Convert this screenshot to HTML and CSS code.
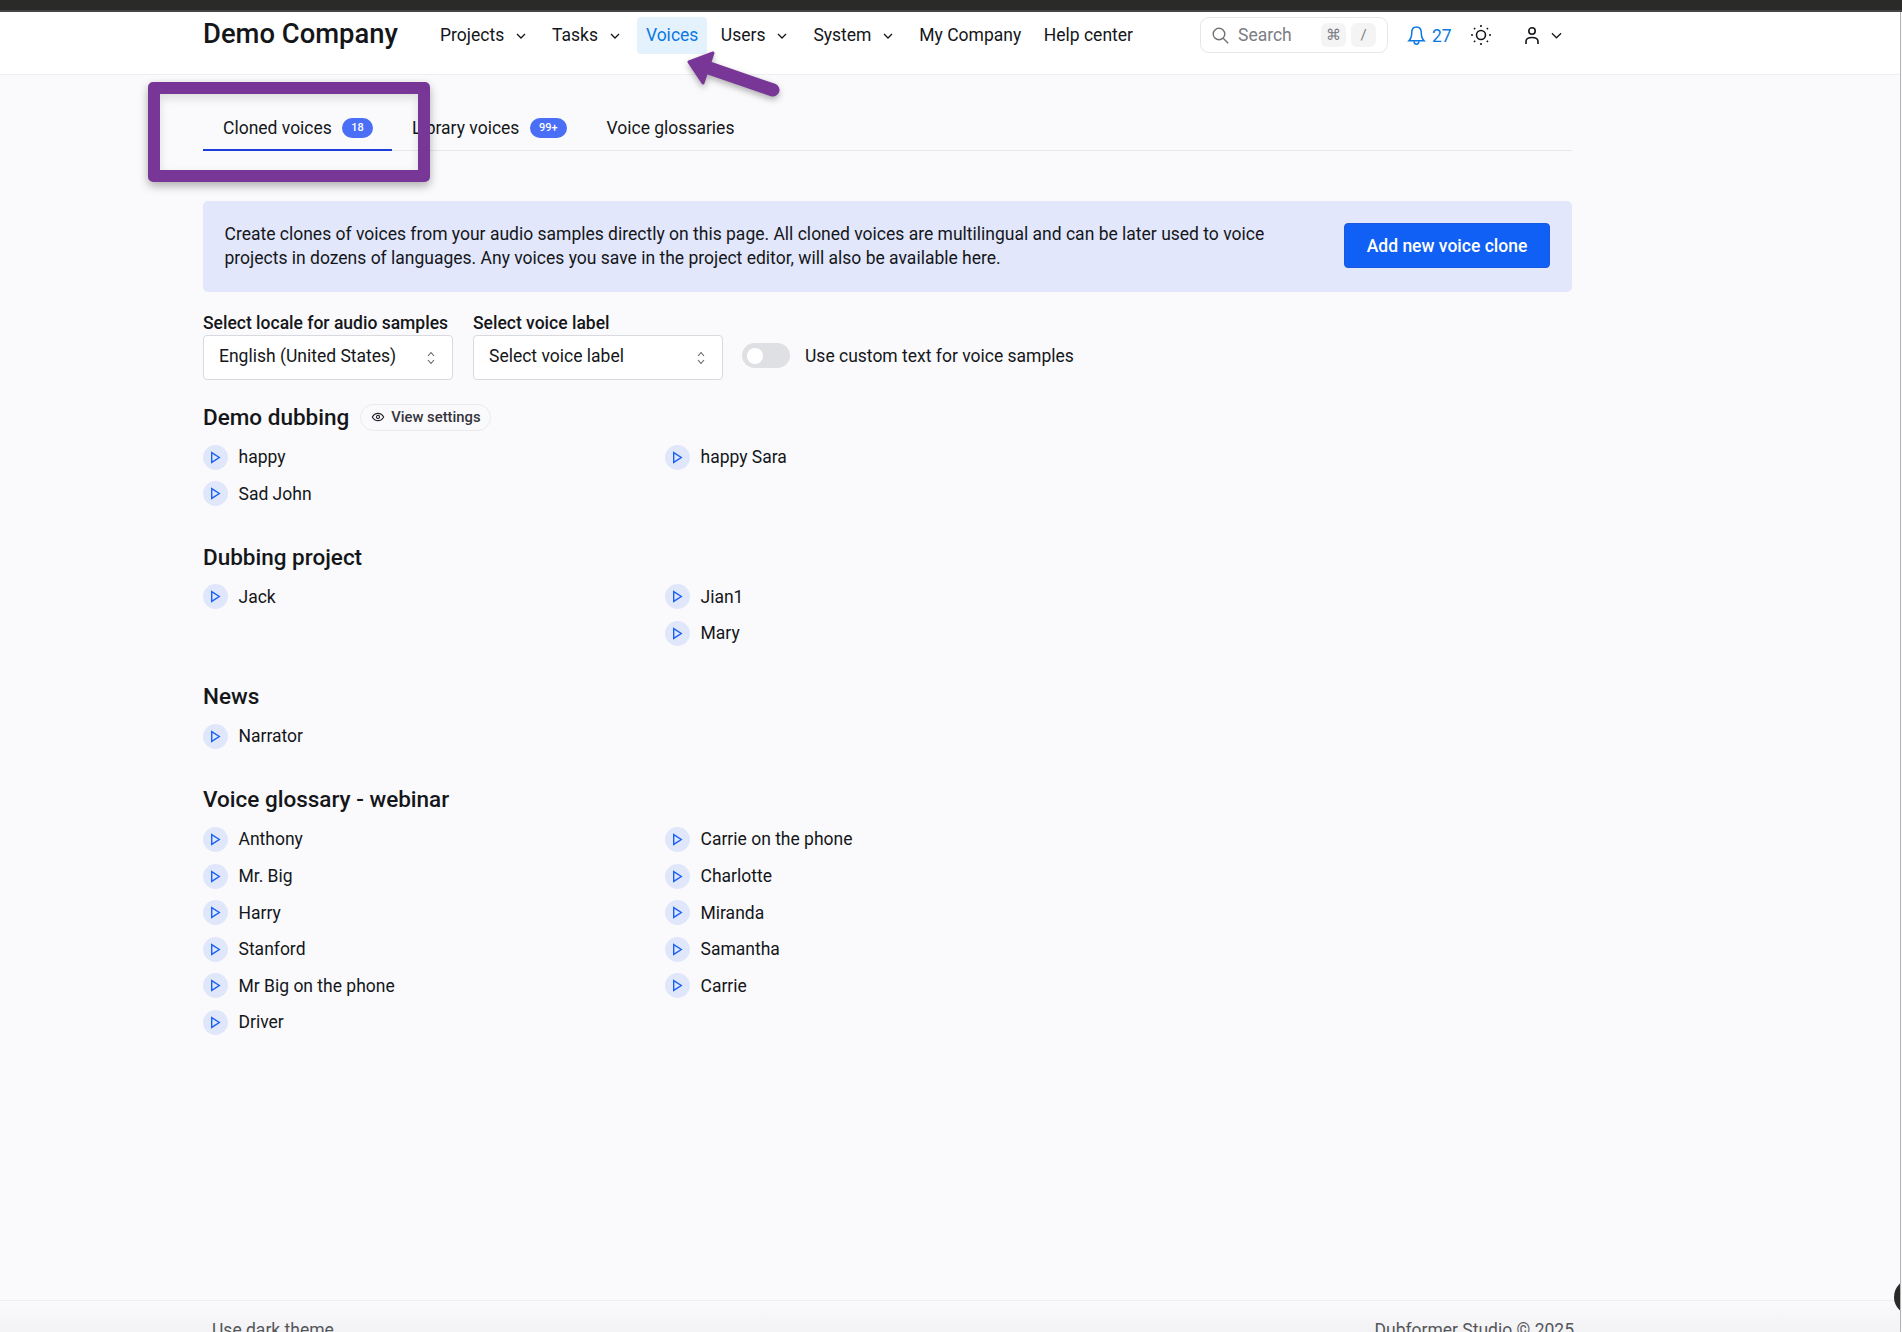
FILE: index.html
```html
<!DOCTYPE html>
<html lang="en">
<head>
    <meta charset="UTF-8">
    <meta name="viewport" content="width=device-width, initial-scale=1.0">
    <title>Voices - Demo Company</title>
    <link rel="stylesheet" href="styles.css">
</head>
<body>
    <div class="top-strip"></div>

    <!-- Header -->
    <header class="header">
        <div class="logo">Demo Company</div>
        <nav class="nav">
            <a class="nav-item">Projects <svg class="chev" viewBox="0 0 12 12"><path d="M2 4l4 4 4-4"/></svg></a>
            <a class="nav-item">Tasks <svg class="chev" viewBox="0 0 12 12"><path d="M2 4l4 4 4-4"/></svg></a>
            <a class="nav-item nav-active">Voices</a>
            <a class="nav-item">Users <svg class="chev" viewBox="0 0 12 12"><path d="M2 4l4 4 4-4"/></svg></a>
            <a class="nav-item">System <svg class="chev" viewBox="0 0 12 12"><path d="M2 4l4 4 4-4"/></svg></a>
            <a class="nav-item">My Company</a>
            <a class="nav-item">Help center</a>
        </nav>
        <div class="search">
            <svg class="search-icon" viewBox="0 0 17 17"><circle cx="7" cy="7" r="5.800"/><path d="M11.200 11.200l5 5"/></svg>
            <span class="search-text">Search</span>
            <span class="key">⌘</span>
            <span class="key">/</span>
        </div>
        <div class="bell">
            <svg viewBox="0 0 20 22"><path d="M10 2c-3.400 0-5 2.800-5 6 0 4-1 6.500-3 8.500h16c-2-2-3-4.500-3-8.500 0-3.200-1.600-6-5-6z"/><path d="M7.500 17c0 2 1 3.200 2.500 3.200s2.500-1.200 2.500-3.200"/></svg>
            <span>27</span>
        </div>
        <svg class="sun" viewBox="0 0 22 22"><circle cx="11" cy="11" r="4.500"/><path d="M11 1v2M11 19v2M1 11h2M19 11h2M4 4l1.200 1.200M16.800 16.800L18 18M4 18l1.200-1.200M16.800 5.200L18 4"/></svg>
        <div class="user">
            <svg class="user-icon" viewBox="0 0 14 17"><circle cx="7" cy="4" r="3.200"/><path d="M1 17v-2.500C1 12 3.200 10.500 7 10.500s6 1.500 6 4V17"/></svg>
            <svg class="chev user-chev" viewBox="0 0 12 12"><path d="M1 3.500l5 5 5-5"/></svg>
        </div>
    </header>

    <main class="content">
        <!-- Tabs -->
        <div class="tabs">
            <div class="tab tab-active">Cloned voices <span class="count">18</span></div>
            <div class="tab">Library voices <span class="count">99+</span></div>
            <div class="tab">Voice glossaries</div>
        </div>

        <!-- Info banner -->
        <div class="banner">
            <p>Create clones of voices from your audio samples directly on this page. All cloned voices are multilingual and can be later used to voice projects in dozens of languages. Any voices you save in the project editor, will also be available here.</p>
            <button class="primary-btn">Add new voice clone</button>
        </div>

        <!-- Filters -->
        <div class="filters">
            <div class="field">
                <label>Select locale for audio samples</label>
                <div class="select">English (United States)
                    <svg viewBox="0 0 10 16"><path d="M2 6l3-3.500L8 6M2 10l3 3.500L8 10"/></svg>
                </div>
            </div>
            <div class="field">
                <label>Select voice label</label>
                <div class="select">Select voice label
                    <svg viewBox="0 0 10 16"><path d="M2 6l3-3.500L8 6M2 10l3 3.500L8 10"/></svg>
                </div>
            </div>
            <div class="toggle-wrap">
                <span class="toggle"></span>
                <span>Use custom text for voice samples</span>
            </div>
        </div>

        <!-- Voice groups -->
        <section class="group">
            <div class="group-title">
                <h2>Demo dubbing</h2>
                <span class="pill">
                    <svg viewBox="0 0 16 16"><path d="M1.500 8C3 5.200 5.300 3.800 8 3.800s5 1.400 6.500 4.200c-1.500 2.800-3.800 4.200-6.500 4.200S3 10.800 1.500 8z"/><circle cx="8" cy="8" r="1.800"/></svg>
                    View settings
                </span>
            </div>
            <div class="voices">
                <div class="voice-col">
                    <div class="voice"><span class="play"><svg viewBox="0 0 12 12"><path d="M2.500 1.500l7 4.500-7 4.500z"/></svg></span>happy</div>
                    <div class="voice"><span class="play"><svg viewBox="0 0 12 12"><path d="M2.500 1.500l7 4.500-7 4.500z"/></svg></span>Sad John</div>
                </div>
                <div class="voice-col">
                    <div class="voice"><span class="play"><svg viewBox="0 0 12 12"><path d="M2.500 1.500l7 4.500-7 4.500z"/></svg></span>happy Sara</div>
                </div>
            </div>
        </section>

        <section class="group">
            <div class="group-title"><h2>Dubbing project</h2></div>
            <div class="voices">
                <div class="voice-col">
                    <div class="voice"><span class="play"><svg viewBox="0 0 12 12"><path d="M2.500 1.500l7 4.500-7 4.500z"/></svg></span>Jack</div>
                </div>
                <div class="voice-col">
                    <div class="voice"><span class="play"><svg viewBox="0 0 12 12"><path d="M2.500 1.500l7 4.500-7 4.500z"/></svg></span>Jian1</div>
                    <div class="voice"><span class="play"><svg viewBox="0 0 12 12"><path d="M2.500 1.500l7 4.500-7 4.500z"/></svg></span>Mary</div>
                </div>
            </div>
        </section>

        <section class="group">
            <div class="group-title"><h2>News</h2></div>
            <div class="voices">
                <div class="voice-col">
                    <div class="voice"><span class="play"><svg viewBox="0 0 12 12"><path d="M2.500 1.500l7 4.500-7 4.500z"/></svg></span>Narrator</div>
                </div>
            </div>
        </section>

        <section class="group">
            <div class="group-title"><h2>Voice glossary - webinar</h2></div>
            <div class="voices">
                <div class="voice-col">
                    <div class="voice"><span class="play"><svg viewBox="0 0 12 12"><path d="M2.500 1.500l7 4.500-7 4.500z"/></svg></span>Anthony</div>
                    <div class="voice"><span class="play"><svg viewBox="0 0 12 12"><path d="M2.500 1.500l7 4.500-7 4.500z"/></svg></span>Mr. Big</div>
                    <div class="voice"><span class="play"><svg viewBox="0 0 12 12"><path d="M2.500 1.500l7 4.500-7 4.500z"/></svg></span>Harry</div>
                    <div class="voice"><span class="play"><svg viewBox="0 0 12 12"><path d="M2.500 1.500l7 4.500-7 4.500z"/></svg></span>Stanford</div>
                    <div class="voice"><span class="play"><svg viewBox="0 0 12 12"><path d="M2.500 1.500l7 4.500-7 4.500z"/></svg></span>Mr Big on the phone</div>
                    <div class="voice"><span class="play"><svg viewBox="0 0 12 12"><path d="M2.500 1.500l7 4.500-7 4.500z"/></svg></span>Driver</div>
                </div>
                <div class="voice-col">
                    <div class="voice"><span class="play"><svg viewBox="0 0 12 12"><path d="M2.500 1.500l7 4.500-7 4.500z"/></svg></span>Carrie on the phone</div>
                    <div class="voice"><span class="play"><svg viewBox="0 0 12 12"><path d="M2.500 1.500l7 4.500-7 4.500z"/></svg></span>Charlotte</div>
                    <div class="voice"><span class="play"><svg viewBox="0 0 12 12"><path d="M2.500 1.500l7 4.500-7 4.500z"/></svg></span>Miranda</div>
                    <div class="voice"><span class="play"><svg viewBox="0 0 12 12"><path d="M2.500 1.500l7 4.500-7 4.500z"/></svg></span>Samantha</div>
                    <div class="voice"><span class="play"><svg viewBox="0 0 12 12"><path d="M2.500 1.500l7 4.500-7 4.500z"/></svg></span>Carrie</div>
                </div>
            </div>
        </section>
    </main>

    <!-- Footer -->
    <footer class="footer">
        <span>Use dark theme</span>
        <span>Dubformer Studio © 2025</span>
    </footer>

    <!-- Annotations drawn over the screenshot -->
    <div class="note-box"></div>
    <svg class="note-arrow" viewBox="0 0 100 50"><path class="arrow-head" d="M3 13L27 4 17 34z"/><path class="arrow-tail" d="M23 19L87 41"/></svg>
    <div class="chat-bubble"></div>
    <div class="edge-line"></div>
</body>
</html>
```

FILE: styles.css
```css
/* General Styling */
body {
    font-family: 'Roboto', sans-serif;
    margin: 0;
    height: 1332px;
    overflow: hidden;
    position: relative;
    display: flex;
    flex-direction: column;
    background: #fafafc;
    color: #14161a;
    font-size: 17.500px;
}

.top-strip {
    height: 10px;
    background: #2a2a29;
    border-bottom: 2px solid #454545;
}

/* Header */
.header {
    height: 63px;
    box-sizing: border-box;
    background: #fff;
    border-bottom: 1px solid #eeeff2;
    display: flex;
    align-items: flex-start;
    padding: 5px 0 0 203px;
}

.logo {
    font-size: 27.400px;
    font-weight: 500;
    line-height: 35px;
    width: 228px;
    white-space: nowrap;
}

.nav {
    display: flex;
    gap: 4.500px;
    width: 769px;
}

.nav-item {
    display: flex;
    align-items: center;
    gap: 11px;
    height: 37px;
    padding: 0 9px 2px;
    box-sizing: border-box;
    border-radius: 4px;
    white-space: nowrap;
}

.nav-active {
    background: #e4f2fd;
    color: #0b78e3;
}

.chev {
    width: 12px;
    height: 12px;
    margin-right: 2.400px;
    margin-top: 2px;
    fill: none;
    stroke: #14161a;
    stroke-width: 1.3;
}

.search {
    width: 188px;
    height: 36px;
    box-sizing: border-box;
    border: 1px solid #e5e6ea;
    border-radius: 9px;
    display: flex;
    align-items: center;
    padding: 0 11px;
    gap: 5px;
    color: #7b7d84;
}

.search-icon {
    width: 17px;
    height: 17px;
    fill: none;
    stroke: #6f7177;
    stroke-width: 1.4;
}

.search-text {
    flex: 1;
    margin-left: 4px;
}

.key {
    width: 25px;
    height: 24px;
    border-radius: 6px;
    background: #f4f4f5;
    text-align: center;
    line-height: 24px;
    font-size: 15px;
}

.bell {
    display: flex;
    align-items: center;
    gap: 6px;
    height: 37px;
    margin-left: 19px;
    color: #0b78e3;
}

.bell svg {
    width: 19px;
    height: 21px;
    fill: none;
    stroke: #0b78e3;
    stroke-width: 1.6;
}

.sun {
    width: 22px;
    height: 22px;
    margin: 7px 0 0 18px;
    fill: none;
    stroke: #14161a;
    stroke-width: 1.6;
}

.user {
    display: flex;
    align-items: center;
    gap: 12px;
    height: 37px;
    margin-left: 33px;
}

.user-icon {
    width: 14px;
    height: 17px;
    fill: none;
    stroke: #14161a;
    stroke-width: 1.6;
}

.user-chev {
    width: 11px;
    height: 11px;
    margin: 0;
}

/* Main content */
.content {
    flex: 1;
    width: 1369px;
    margin-left: 203px;
}

.tabs {
    display: flex;
    height: 76px;
    box-sizing: border-box;
    border-bottom: 1px solid #e6e7ea;
}

.tab {
    height: 76px;
    box-sizing: border-box;
    padding: 41px 20px 0;
    display: flex;
    gap: 10.500px;
    align-items: flex-start;
    line-height: 24px;
    white-space: nowrap;
}

.tab-active {
    border-bottom: 2px solid #1b3fd8;
    width: 189px;
}

.count {
    background: #4a6ef5;
    color: #fff;
    font-size: 11px;
    font-weight: 500;
    border-radius: 10px;
    padding: 0 9px;
    height: 20px;
    line-height: 20px;
    margin-top: 2px;
}

/* Banner */
.banner {
    margin-top: 50px;
    height: 91px;
    box-sizing: border-box;
    background: #e2e7fb;
    border-radius: 5px;
    display: flex;
    align-items: center;
    justify-content: space-between;
    padding: 0 22px 2px 21.500px;
}

.banner p {
    width: 1060px;
    margin: 0;
    line-height: 24px;
}

.primary-btn {
    width: 206px;
    height: 45px;
    background: #1160f5;
    color: #fff;
    font-family: inherit;
    font-size: 17.500px;
    font-weight: 500;
    border: 1px solid #1a58e0;
    border-radius: 4px;
}

/* Filters */
.filters {
    display: flex;
    align-items: flex-end;
    gap: 20px;
    margin-top: 20px;
}

.field {
    width: 250px;
}

.field label {
    display: block;
    font-weight: 500;
    line-height: 22px;
    white-space: nowrap;
}

.select {
    height: 45px;
    margin-top: 1px;
    box-sizing: border-box;
    background: #fff;
    border: 1px solid #d9dadf;
    border-radius: 4px;
    padding: 0 16px 3px 15px;
    display: flex;
    align-items: center;
    justify-content: space-between;
}

.select svg {
    width: 10px;
    height: 16px;
    margin-top: 4px;
    fill: none;
    stroke: #5e6066;
    stroke-width: 1.1;
}

.toggle-wrap {
    display: flex;
    align-items: center;
    gap: 15px;
    height: 45px;
    padding-bottom: 4px;
    box-sizing: border-box;
    margin-left: -1px;
}

.toggle {
    width: 48px;
    height: 25px;
    background: #dfe0e3;
    border-radius: 13px;
    display: flex;
    align-items: center;
    padding-left: 5px;
    box-sizing: border-box;
}

.toggle::after {
    content: "";
    width: 16px;
    height: 16px;
    border-radius: 50%;
    background: #fff;
}

/* Voice groups */
.group {
    margin-bottom: 29.400px;
}

.group-title {
    display: flex;
    align-items: center;
    gap: 11px;
    height: 30px;
    margin-bottom: 7px;
}

.filters + .group {
    margin-top: 22px;
}

.group-title h2 {
    font-size: 22.500px;
    font-weight: 500;
    margin: 0;
}

.pill {
    height: 27px;
    padding: 0 9px 0 10px;
    box-sizing: border-box;
    border: 1px solid #e9eaed;
    border-radius: 14px;
    display: flex;
    align-items: center;
    gap: 6px;
    font-size: 14.800px;
    font-weight: 500;
    color: #33353b;
}

.pill svg {
    width: 14px;
    height: 14px;
    fill: none;
    stroke: #26282d;
    stroke-width: 1.3;
}

.voices {
    display: flex;
}

.voice-col {
    width: 462px;
}

.voice {
    display: flex;
    align-items: center;
    gap: 10.500px;
    height: 36.600px;
}

.play {
    width: 25px;
    height: 25px;
    border-radius: 50%;
    background: #e0e7fb;
    display: flex;
    align-items: center;
    justify-content: center;
}

.play svg {
    width: 13px;
    height: 13px;
    fill: none;
    stroke: #1c62f0;
    stroke-width: 1.3;
}

/* Footer */
.footer {
    height: 32px;
    flex-shrink: 0;
    box-sizing: border-box;
    border-top: 1px solid #eeeef1;
    background: linear-gradient(#fafafc, #f3f3f5);
    color: #55575c;
    display: flex;
    justify-content: space-between;
    padding: 17px 328px 0 212px;
    line-height: 24px;
}

/* Annotations */
.note-box {
    position: absolute;
    left: 148px;
    top: 82px;
    width: 282px;
    height: 100px;
    box-sizing: border-box;
    border: 12px solid #783797;
    border-radius: 5px;
    box-shadow: 0 4px 10px rgba(0, 0, 0, 0.3), inset 0 4px 10px rgba(0, 0, 0, 0.12);
}

.note-arrow {
    position: absolute;
    left: 686px;
    top: 49px;
    width: 100px;
    height: 50px;
    overflow: visible;
    filter: drop-shadow(0 3px 3px rgba(0, 0, 0, 0.3));
}

.arrow-head {
    fill: #783797;
    stroke: #783797;
    stroke-width: 3;
    stroke-linejoin: round;
}

.arrow-tail {
    fill: none;
    stroke: #783797;
    stroke-width: 13;
    stroke-linecap: round;
}

.chat-bubble {
    position: absolute;
    left: 1894px;
    top: 1279px;
    width: 36px;
    height: 36px;
    border-radius: 50%;
    background: #2a2a29;
}

.edge-line {
    position: absolute;
    left: 1900px;
    top: 12px;
    bottom: 0;
    width: 1px;
    background: #b4b4b4;
    border-right: 1px solid #fafafa;
}
```
